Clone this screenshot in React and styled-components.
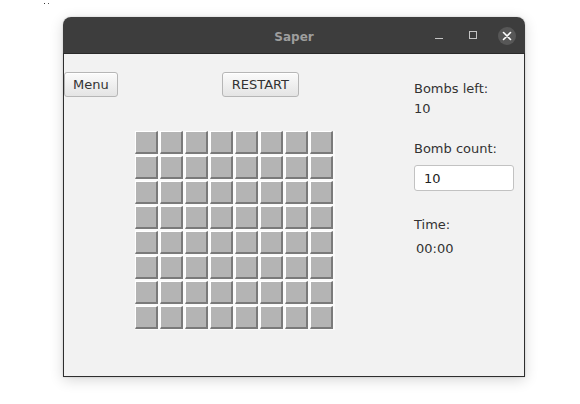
import React from "react";
import styled, { createGlobalStyle } from "styled-components";

const Global = createGlobalStyle`
  html, body { margin: 0; padding: 0; background: #ffffff; }
  body { width: 580px; height: 404px; overflow: hidden; position: relative; font-family: "DejaVu Sans", "Liberation Sans", sans-serif; }
`;

const Specks = styled.span`
  position: absolute;
  left: 44px;
  top: 3px;
  width: 1px;
  height: 1px;
  background: #333;
  box-shadow: 4px 0 0 #555;
`;

const Window = styled.div`
  margin: 17px 0 0 63px;
  width: 462px;
  height: 360px;
  display: flex;
  flex-direction: column;
  border-radius: 8px 8px 0 0;
  overflow: hidden;
  box-shadow: 0 3px 14px rgba(0, 0, 0, 0.16), 0 0 2px rgba(0, 0, 0, 0.2);
`;

const TitleBar = styled.div`
  height: 36px;
  flex: none;
  background: #3d3d3d;
  border-bottom: 1px solid #2a2a2a;
  display: grid;
  grid-template-columns: 1fr auto 1fr;
  align-items: center;
`;

const Title = styled.div`
  grid-column: 2;
  color: #9e9e9e;
  font-weight: bold;
  font-size: 12px;
  padding-top: 3px;
`;

const Controls = styled.div`
  grid-column: 3;
  justify-self: end;
  display: flex;
  align-items: center;
  gap: 16px;
  padding-right: 9px;
  padding-top: 1px;
`;

const Ctl = styled.div`
  width: 18px;
  height: 18px;
  display: flex;
  align-items: center;
  justify-content: center;
  border-radius: 50%;
  background: ${(p) => (p.$close ? "#575757" : "transparent")};
`;

const MinLine = styled.div`
  width: 8px;
  height: 1px;
  background: #c4c4c4;
  margin-top: 5px;
`;

const MaxBox = styled.div`
  width: 6px;
  height: 6px;
  border: 1px solid #c4c4c4;
  margin-top: -1px;
`;

const Content = styled.div`
  flex: 1;
  background: #f2f2f2;
  border: 1px solid #2e2e2e;
  border-top: none;
  display: flex;
`;

const Main = styled.div`
  width: 350px;
  padding-top: 18px;
  display: flex;
  flex-direction: column;
`;

const Toolbar = styled.div`
  display: flex;
  gap: 104px;
`;

const Button = styled.button`
  height: 25px;
  padding: 0 ${(p) => p.$pad || 8}px;
  margin: 0;
  font-family: "DejaVu Sans", sans-serif;
  font-size: 13px;
  color: #333;
  background: linear-gradient(#fbfbfb, #e4e4e4);
  border: 1px solid #b6b6b6;
  border-radius: 3px;
  box-shadow: inset 0 1px 0 #ffffff;
  line-height: 23px;
`;

const Board = styled.div`
  margin: 34px 0 0 71px;
  width: 200px;
  display: grid;
  grid-template-columns: repeat(8, 23px);
  grid-auto-rows: 23px;
  gap: 2px;
  background: #fafafa;
  padding: 0 0 1px 0;
`;

const Cell = styled.div`
  box-sizing: border-box;
  border-style: solid;
  border-width: 1px 2px 2px 1px;
  border-color: #ffffff #7a7a7a #7a7a7a #ffffff;
  background: #b4b4b4;
`;

const Side = styled.div`
  padding: 27px 0 0 0;
  display: flex;
  flex-direction: column;
  align-items: flex-start;
  font-size: 13px;
  line-height: 15px;
  color: #333;
`;

const Label = styled.div`
  margin-top: ${(p) => p.$mt || 0}px;
  margin-left: ${(p) => p.$ml || 0}px;
`;

const Field = styled.input`
  margin-top: 9px;
  box-sizing: border-box;
  width: 100px;
  height: 26px;
  padding: 0 0 0 9px;
  font-family: "DejaVu Sans", sans-serif;
  font-size: 13px;
  color: #222;
  background: #fff;
  border: 1px solid #c2c2c2;
  border-radius: 3px;
  outline: none;
`;

export default function App() {
  const cells = Array.from({ length: 64 }, (_, i) => i);
  return (
    <>
      <Global />
      <Specks />
      <Window>
        <TitleBar>
          <Title>Saper</Title>
          <Controls>
            <Ctl>
              <MinLine />
            </Ctl>
            <Ctl>
              <MaxBox />
            </Ctl>
            <Ctl $close>
              <svg width="10" height="10" viewBox="0 0 10 10">
                <path d="M1.5 1.5 L8.5 8.5 M8.5 1.5 L1.5 8.5" stroke="#fff" strokeWidth="1.6" strokeLinecap="round" />
              </svg>
            </Ctl>
          </Controls>
        </TitleBar>
        <Content>
          <Main>
            <Toolbar>
              <Button>Menu</Button>
              <Button $pad={9}>RESTART</Button>
            </Toolbar>
            <Board>
              {cells.map((i) => (
                <Cell key={i} />
              ))}
            </Board>
          </Main>
          <Side>
            <Label>Bombs left:</Label>
            <Label $mt={5}>10</Label>
            <Label $mt={25}>Bomb count:</Label>
            <Field defaultValue="10" />
            <Label $mt={26}>Time:</Label>
            <Label $mt={9} $ml={2}>00:00</Label>
          </Side>
        </Content>
      </Window>
    </>
  );
}
